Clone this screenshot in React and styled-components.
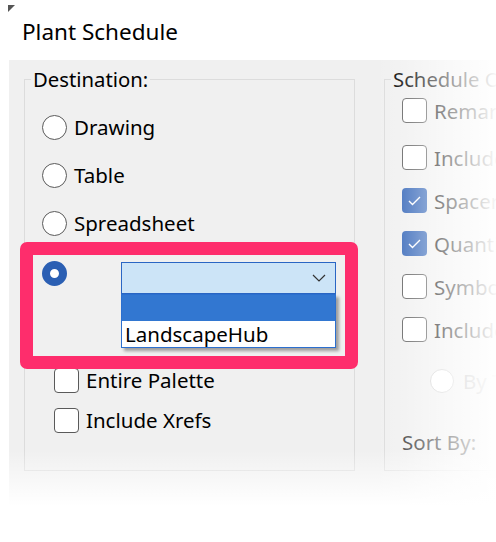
import styled, { createGlobalStyle } from 'styled-components';

const GlobalStyle = createGlobalStyle`
  html, body {
    margin: 0;
    padding: 0;
    background: #ffffff;
    overflow: hidden;
  }
  body {
    font-family: "Noto Sans", "Open Sans", sans-serif;
    color: #000;
  }
`;

function Check() {
  return (
    <svg width="13" height="10" viewBox="0 0 13 10">
      <polyline points="1,5 4.5,8.5 12,1" fill="none" stroke="#fff" strokeWidth="1.4" />
    </svg>
  );
}

function Chevron() {
  return (
    <svg width="14" height="8" viewBox="0 0 14 8">
      <polyline points="1,1 7,7 13,1" fill="none" stroke="#333" strokeWidth="1.2" />
    </svg>
  );
}

export default function App() {
  return (
    <Page>
      <GlobalStyle />
      <Header>
        <Corner />
        <Title>Plant Schedule</Title>
      </Header>
      <Panel>
        <Groups>
          <GroupBox $width={331}>
            <Caption>Destination:</Caption>
            <RadioRow>
              <Radio />
              <Label>Drawing</Label>
            </RadioRow>
            <RadioRow>
              <Radio />
              <Label>Table</Label>
            </RadioRow>
            <RadioRow>
              <Radio />
              <Label>Spreadsheet</Label>
            </RadioRow>
            <OtherRow>
              <Highlight />
              <Radio $checked />
              <Combo>
                <Chevron />
                <DropList>
                  <ListItem $selected />
                  <ListItem>LandscapeHub</ListItem>
                </DropList>
              </Combo>
            </OtherRow>
            <CheckRow $indent={12}>
              <Box />
              <Label>Entire Palette</Label>
            </CheckRow>
            <CheckRow $indent={12}>
              <Box />
              <Label>Include Xrefs</Label>
            </CheckRow>
          </GroupBox>

          <GroupBox $width={220}>
            <Caption>Schedule Options:</Caption>
            <OptionRow $first>
              <Box />
              <Label>Remarks</Label>
            </OptionRow>
            <OptionRow>
              <Box />
              <Label>Include Images</Label>
            </OptionRow>
            <OptionRow>
              <Box $checked><Check /></Box>
              <Label>Spacer</Label>
            </OptionRow>
            <OptionRow>
              <Box $checked><Check /></Box>
              <Label>Quantities</Label>
            </OptionRow>
            <OptionRow>
              <Box />
              <Label>Symbols</Label>
            </OptionRow>
            <OptionRow>
              <Box />
              <Label>Include Notes</Label>
            </OptionRow>
            <SubRow>
              <Radio $disabled $size={24} />
              <Label $muted>By Type</Label>
            </SubRow>
            <SortLabel>Sort By:</SortLabel>
          </GroupBox>
        </Groups>
        <FadeRight />
        <FadeBottom />
      </Panel>
    </Page>
  );
}

const Page = styled.div`
  width: 496px;
  height: 542px;
  position: relative;
  overflow: hidden;
`;

const Header = styled.div`
  height: 60px;
  position: relative;
  display: flex;
  align-items: center;
  padding-left: 22px;
  box-sizing: border-box;
`;

const Corner = styled.div`
  position: absolute;
  top: 5px;
  left: 8px;
  width: 0;
  height: 0;
  border-top: 7px solid #555;
  border-right: 7px solid transparent;
`;

const Title = styled.div`
  font-size: 22.5px;
  line-height: 28px;
  margin-top: 4px;
`;

const Panel = styled.div`
  position: relative;
  margin-left: 9px;
  height: 446px;
  background: #f0f0f0;
  padding: 19px 0 0 15px;
  box-sizing: border-box;
`;

const Groups = styled.div`
  display: flex;
  gap: 29px;
`;

const GroupBox = styled.div`
  position: relative;
  flex: none;
  width: ${p => p.$width}px;
  height: 392px;
  box-sizing: border-box;
  border: 1px solid #dcdcdc;
  padding: 23px 0 0 17px;
  display: flex;
  flex-direction: column;
`;

const Caption = styled.div`
  position: absolute;
  top: -13px;
  left: 6px;
  padding: 0 2px;
  background: #f0f0f0;
  font-size: 20.3px;
  line-height: 24px;
  white-space: nowrap;
`;

const Label = styled.span`
  font-size: 20.5px;
  line-height: 24px;
  white-space: nowrap;
  color: ${p => (p.$muted ? '#b0b0b0' : '#000')};
`;

const RadioRow = styled.div`
  height: 48px;
  display: flex;
  align-items: center;
  gap: 7px;
`;

const Radio = styled.span`
  flex: none;
  box-sizing: border-box;
  width: ${p => p.$size || 25}px;
  height: ${p => p.$size || 25}px;
  border-radius: 50%;
  border: ${p =>
    p.$checked ? '8px solid #2b5fb3' : p.$disabled ? '1.5px solid #cfcfcf' : '1.5px solid #5a5a5a'};
  background: #fff;
`;

const OtherRow = styled.div`
  position: relative;
  height: 99px;
  margin-top: 14px;
  display: flex;
  align-items: flex-start;
`;

const Highlight = styled.div`
  position: absolute;
  left: -22px;
  top: -19px;
  width: 338px;
  height: 127px;
  box-sizing: border-box;
  border: 13px solid #fe2d6c;
  border-radius: 7px;
  pointer-events: none;
  z-index: 1;
`;

const Combo = styled.div`
  position: relative;
  margin: 1px 0 0 54px;
  width: 215px;
  height: 32px;
  box-sizing: border-box;
  background: #cce4f7;
  border: 1px solid #2a66c4;
  display: flex;
  align-items: center;
  justify-content: flex-end;
  padding-right: 9px;
`;

const DropList = styled.div`
  position: absolute;
  top: 31px;
  left: -1px;
  width: 215px;
  box-sizing: border-box;
  border: 1px solid #2b6fcf;
  background: #fff;
  box-shadow: 3px 3px 3px rgba(0, 0, 0, 0.35);
  z-index: 2;
`;

const ListItem = styled.div`
  height: 26px;
  padding-left: 3px;
  font-size: 20.5px;
  line-height: 26px;
  background: ${p => (p.$selected ? '#3277d1' : '#fff')};
`;

const CheckRow = styled.div`
  height: 40px;
  display: flex;
  align-items: center;
  gap: 7px;
  padding-left: ${p => p.$indent}px;
`;

const Box = styled.span`
  flex: none;
  box-sizing: border-box;
  width: 25px;
  height: 25px;
  border-radius: 4px;
  border: ${p => (p.$checked ? 'none' : '1.5px solid #5a5a5a')};
  background: ${p => (p.$checked ? '#2f62b6' : '#fff')};
  display: flex;
  align-items: center;
  justify-content: center;
`;

const OptionRow = styled.div`
  height: 43px;
  margin-bottom: ${p => (p.$first ? 4 : 0)}px;
  margin-top: ${p => (p.$first ? -14 : 0)}px;
  display: flex;
  align-items: center;
  gap: 7px;
`;

const SubRow = styled.div`
  height: 43px;
  margin-top: 8px;
  padding-left: 28px;
  display: flex;
  align-items: center;
  gap: 9px;
`;

const SortLabel = styled.div`
  margin-top: 24px;
  font-size: 20.5px;
  line-height: 32px;
  color: #333;
`;

const FadeRight = styled.div`
  position: absolute;
  top: -60px;
  right: 0;
  width: 120px;
  height: 542px;
  background: linear-gradient(to right, rgba(255,255,255,0), rgba(255,255,255,0.15) 18%, rgba(255,255,255,0.5) 50%, rgba(255,255,255,0.97));
  pointer-events: none;
  z-index: 3;
`;

const FadeBottom = styled.div`
  position: absolute;
  left: 0;
  right: 0;
  bottom: 0;
  height: 56px;
  background: linear-gradient(to bottom, rgba(255,255,255,0), rgba(255,255,255,1));
  pointer-events: none;
  z-index: 3;
`;
